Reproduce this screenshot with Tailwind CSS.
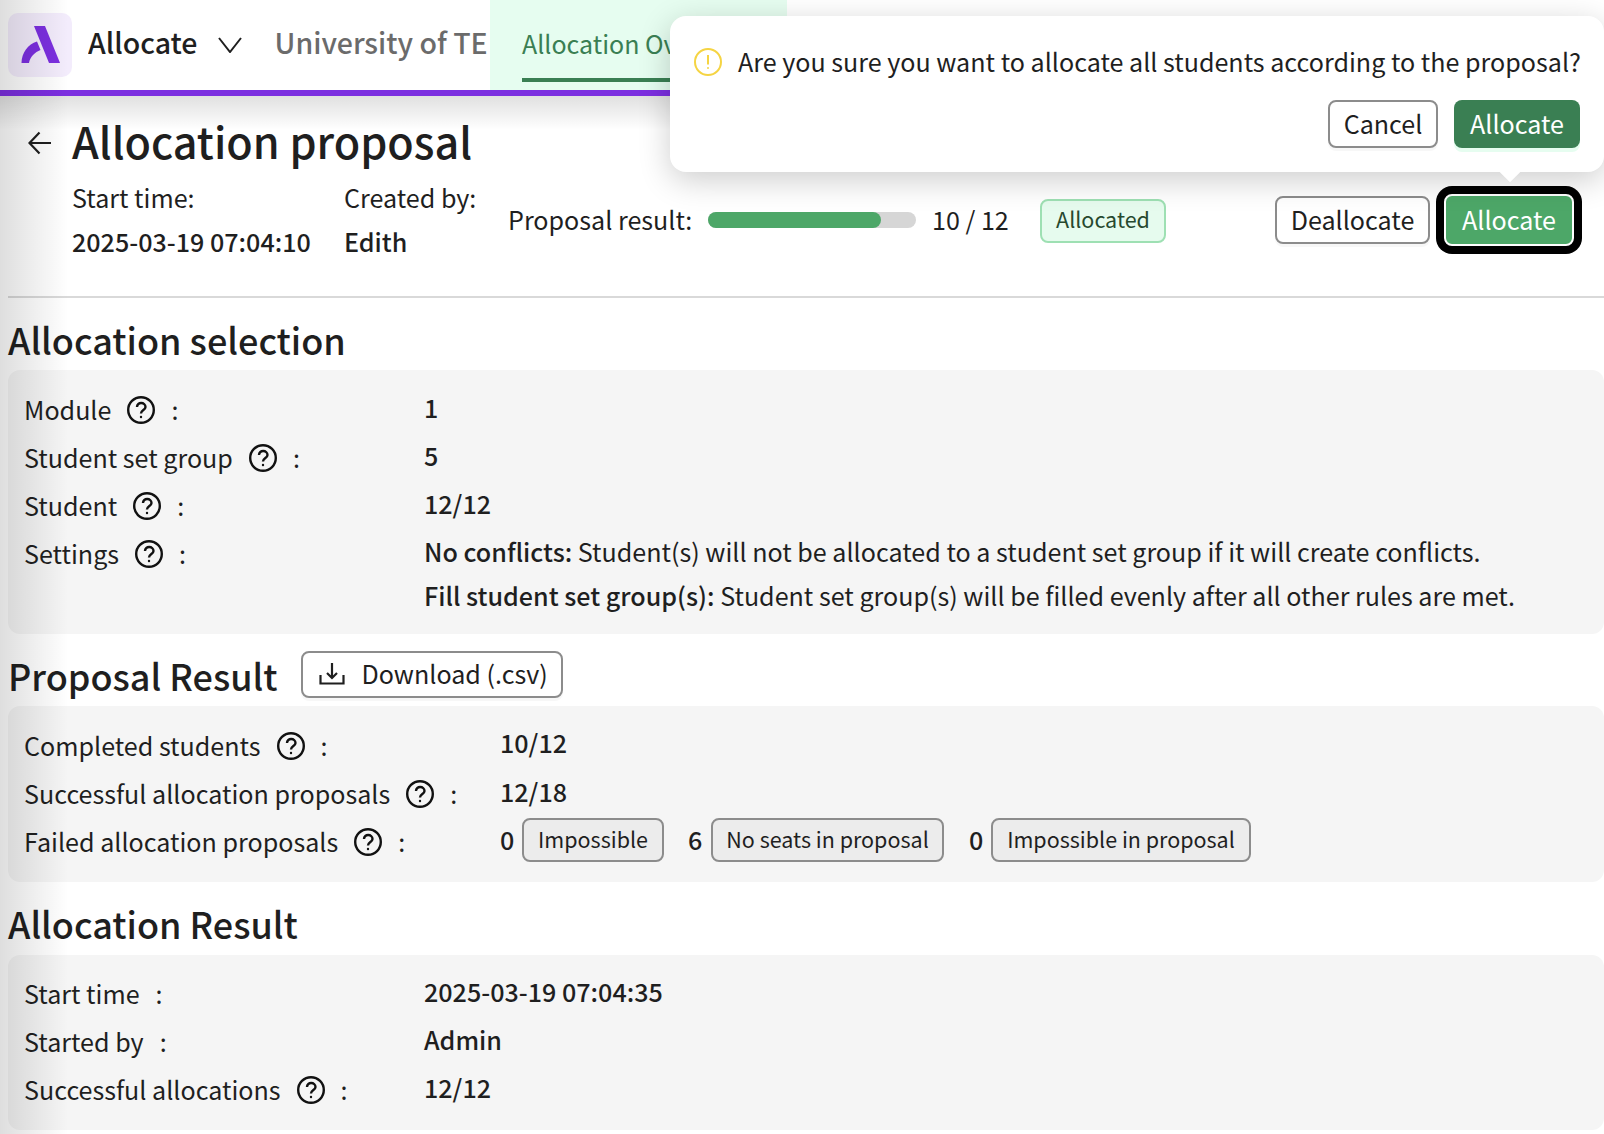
<!DOCTYPE html>
<html lang="en">
  <head>
    <meta charset="UTF-8" />
    <title>Allocation proposal</title>
    <script src="https://cdn.jsdelivr.net/npm/@tailwindcss/browser@4"></script>
  </head>
  <body class="bg-white">
    <div class="relative w-[1604px] h-[1134px] overflow-hidden whitespace-nowrap text-[25.1px] text-[#1f1f1f] font-['Noto_Sans_CJK_SC','Noto_Sans',sans-serif]">
      <!-- header -->
      <header class="flex h-[96px] border-b-[6px] border-[#7c2fe0]">
        <div class="ml-[8px] mt-[13px] w-[64px] h-[64px] rounded-[10px] bg-[#f3ecfc]">
          <svg viewBox="0 0 64 64" class="w-[64px] h-[64px]" fill="#7c2fe0">
            <path d="M26 13H37L52 50H41Z" />
            <path d="M13.5 50C13.5 40 20 31 29 28.5L32.500 37C27 39 22 44 21 50Z" />
          </svg>
        </div>
        <div class="ml-[16px] w-[402px] h-[90px] flex items-center overflow-hidden">
          <span class="text-[28.5px] leading-[40px] font-medium -translate-y-[3px]">Allocate</span>
          <svg viewBox="0 0 24 16" class="shrink-0 ml-[20px] w-[24px] h-[16px]" fill="none" stroke="#1f1f1f" stroke-width="2">
            <path d="M1 1L12 15L23 1" />
          </svg>
          <span class="ml-[33px] text-[28.5px] leading-[40px] font-medium text-[#6b6b6b] -translate-y-[3px]">University of TE</span>
        </div>
        <div class="relative w-[297px] h-[90px] pl-[32px] bg-[#e6fdf0] text-[#3a7f53] text-[25px] leading-[86px] overflow-hidden">
          Allocation Overview
          <div class="absolute left-[32px] right-0 top-[78px] h-[4px] bg-[#3a7f53]"></div>
        </div>
      </header>

      <!-- proposal head -->
      <div class="h-[200px] pl-[28px] pt-[16px]">
        <div class="flex items-center h-[56px]">
          <svg viewBox="0 0 24 24" class="shrink-0 mt-[6px] w-[24px] h-[24px]" fill="none" stroke="#1f1f1f" stroke-width="2.200">
            <path d="M23 12H1.500M11.500 1.500L1.500 12L11.500 22.500" />
          </svg>
          <h1 class="ml-[20px] text-[43.100px] leading-[56px] font-medium">Allocation proposal</h1>
        </div>
        <div class="flex items-center mt-[8px] h-[88px] pl-[44px]">
          <div class="w-[272px] leading-[44px] -translate-y-px">
            <div>Start time:</div>
            <div class="font-medium">2025-03-19 07:04:10</div>
          </div>
          <div class="w-[164px] leading-[44px] -translate-y-px">
            <div>Created by:</div>
            <div class="font-medium">Edith</div>
          </div>
          <div class="w-[200px]">Proposal result:</div>
          <div class="w-[208px] h-[16px] rounded-full bg-[#d6d6d6]">
            <div class="h-[16px] w-[173px] rounded-full bg-[#4da768]"></div>
          </div>
          <div class="ml-[16px] w-[108px]">10 / 12</div>
          <div class="w-[126px] h-[44px] translate-y-px flex items-center justify-center rounded-[8px] border-2 border-[#9ee0b3] bg-[#e6fbee] text-[21.500px] text-[#27492f]"><span class="-translate-y-[2px]">Allocated</span></div>
          <button class="ml-[109px] w-[155px] h-[48px] flex items-center justify-center rounded-[8px] border-2 border-[#8c8c8c] bg-white shadow-[0_3px_0_rgba(0,0,0,0.03)]">Deallocate</button>
          <button class="ml-[14px] w-[130px] h-[52px] flex items-center justify-center rounded-[8px] border-2 border-white bg-[#4da768] text-white shadow-[0_0_0_8px_black]">Allocate</button>
        </div>
      </div>

      <hr class="ml-[8px] border-0 h-[2px] bg-[#d9d9d9]" />

      <main class="pl-[8px]">
        <h2 class="h-[72px] pt-[10px] flex items-center text-[36px] font-medium">Allocation selection</h2>
        <section class="rounded-[12px] bg-[#f5f5f5] pl-[16px] py-[16px]">
          <div class="flex flex-col gap-[4px]">
            <div class="flex">
              <div class="w-[400px] flex items-center h-[44px] mt-[2px] -mb-[2px]">
                Module
                <svg viewBox="0 0 28 28" class="shrink-0 ml-[16px] w-[28px] h-[28px]" fill="none" stroke="#111" stroke-width="2.400"><circle cx="14" cy="14" r="12.800" /><path d="M10 11C10 5.500 18.500 6 18.500 11C18.500 14 14 14 14 17.500" /><circle cx="14" cy="21" r="1.200" fill="#111" stroke="none" /></svg>
                <span class="ml-[16px]">:</span>
              </div>
              <div class="leading-[44px] font-medium -translate-y-px">1</div>
            </div>
            <div class="flex">
              <div class="w-[400px] flex items-center h-[44px] mt-[2px] -mb-[2px]">
                Student set group
                <svg viewBox="0 0 28 28" class="shrink-0 ml-[16px] w-[28px] h-[28px]" fill="none" stroke="#111" stroke-width="2.400"><circle cx="14" cy="14" r="12.800" /><path d="M10 11C10 5.500 18.500 6 18.500 11C18.500 14 14 14 14 17.500" /><circle cx="14" cy="21" r="1.200" fill="#111" stroke="none" /></svg>
                <span class="ml-[16px]">:</span>
              </div>
              <div class="leading-[44px] font-medium -translate-y-px">5</div>
            </div>
            <div class="flex">
              <div class="w-[400px] flex items-center h-[44px] mt-[2px] -mb-[2px]">
                Student
                <svg viewBox="0 0 28 28" class="shrink-0 ml-[16px] w-[28px] h-[28px]" fill="none" stroke="#111" stroke-width="2.400"><circle cx="14" cy="14" r="12.800" /><path d="M10 11C10 5.500 18.500 6 18.500 11C18.500 14 14 14 14 17.500" /><circle cx="14" cy="21" r="1.200" fill="#111" stroke="none" /></svg>
                <span class="ml-[16px]">:</span>
              </div>
              <div class="leading-[44px] font-medium -translate-y-px">12/12</div>
            </div>
            <div class="flex">
              <div class="w-[400px] flex items-center h-[44px] mt-[2px] -mb-[2px]">
                Settings
                <svg viewBox="0 0 28 28" class="shrink-0 ml-[16px] w-[28px] h-[28px]" fill="none" stroke="#111" stroke-width="2.400"><circle cx="14" cy="14" r="12.800" /><path d="M10 11C10 5.500 18.500 6 18.500 11C18.500 14 14 14 14 17.500" /><circle cx="14" cy="21" r="1.200" fill="#111" stroke="none" /></svg>
                <span class="ml-[16px]">:</span>
              </div>
              <div class="leading-[44px] -translate-y-px">
                <div><span class="font-medium">No conflicts:</span> Student(s) will not be allocated to a student set group if it will create conflicts.</div>
                <div><span class="font-medium">Fill student set group(s):</span> Student set group(s) will be filled evenly after all other rules are met.</div>
              </div>
            </div>
          </div>
        </section>

        <div class="h-[72px] pt-[10px] flex items-center">
          <h2 class="text-[36px] font-medium">Proposal Result</h2>
          <button class="ml-[23px] mt-[-1px] w-[262px] h-[47px] flex items-center pl-[16px] rounded-[8px] border-2 border-[#8c8c8c] bg-white shadow-[0_3px_0_rgba(0,0,0,0.03)]">
            <svg viewBox="0 0 26 26" class="shrink-0 w-[26px] h-[26px]" fill="none" stroke="#1f1f1f" stroke-width="2.200">
              <path d="M13 1V16M8 11L13 16L18 11M1.500 13V21.500H24.500V13" />
            </svg>
            <span class="ml-[17px] -translate-y-px">Download (.csv)</span>
          </button>
        </div>
        <section class="rounded-[12px] bg-[#f5f5f5] pl-[16px] pt-[16px] pb-[20px]">
          <div class="flex flex-col gap-[4px]">
            <div class="flex">
              <div class="w-[476px] flex items-center h-[44px] mt-[2px] -mb-[2px]">
                Completed students
                <svg viewBox="0 0 28 28" class="shrink-0 ml-[16px] w-[28px] h-[28px]" fill="none" stroke="#111" stroke-width="2.400"><circle cx="14" cy="14" r="12.800" /><path d="M10 11C10 5.500 18.500 6 18.500 11C18.500 14 14 14 14 17.500" /><circle cx="14" cy="21" r="1.200" fill="#111" stroke="none" /></svg>
                <span class="ml-[16px]">:</span>
              </div>
              <div class="leading-[44px] font-medium -translate-y-[2px]">10/12</div>
            </div>
            <div class="flex">
              <div class="w-[476px] flex items-center h-[44px] mt-[2px] -mb-[2px]">
                Successful allocation proposals
                <svg viewBox="0 0 28 28" class="shrink-0 ml-[16px] w-[28px] h-[28px]" fill="none" stroke="#111" stroke-width="2.400"><circle cx="14" cy="14" r="12.800" /><path d="M10 11C10 5.500 18.500 6 18.500 11C18.500 14 14 14 14 17.500" /><circle cx="14" cy="21" r="1.200" fill="#111" stroke="none" /></svg>
                <span class="ml-[16px]">:</span>
              </div>
              <div class="leading-[44px] font-medium -translate-y-px">12/18</div>
            </div>
            <div class="flex">
              <div class="w-[476px] flex items-center h-[44px] mt-[2px] -mb-[2px]">
                Failed allocation proposals
                <svg viewBox="0 0 28 28" class="shrink-0 ml-[16px] w-[28px] h-[28px]" fill="none" stroke="#111" stroke-width="2.400"><circle cx="14" cy="14" r="12.800" /><path d="M10 11C10 5.500 18.500 6 18.500 11C18.500 14 14 14 14 17.500" /><circle cx="14" cy="21" r="1.200" fill="#111" stroke="none" /></svg>
                <span class="ml-[16px]">:</span>
              </div>
              <div class="flex items-center h-[44px] font-medium">
                <span class="w-[22px]">0</span>
                <span class="w-[142px] h-[44px] flex items-center justify-center rounded-[8px] border-2 border-[#8c8c8c] bg-[#ececec] text-[21.500px] font-normal"><span class="-translate-y-px">Impossible</span></span>
                <span class="ml-[24px] w-[23px]">6</span>
                <span class="w-[233px] h-[44px] flex items-center justify-center rounded-[8px] border-2 border-[#8c8c8c] bg-[#ececec] text-[21.500px] font-normal"><span class="-translate-y-px">No seats in proposal</span></span>
                <span class="ml-[25px] w-[22px]">0</span>
                <span class="w-[260px] h-[44px] flex items-center justify-center rounded-[8px] border-2 border-[#8c8c8c] bg-[#ececec] text-[21.500px] font-normal"><span class="-translate-y-px">Impossible in proposal</span></span>
              </div>
            </div>
          </div>
        </section>

        <h2 class="h-[73px] pt-[9px] flex items-center text-[36px] font-medium">Allocation Result</h2>
        <section class="rounded-[12px] bg-[#f5f5f5] pl-[16px] pt-[15px] pb-[20px]">
          <div class="flex flex-col gap-[4px]">
            <div class="flex">
              <div class="w-[400px] flex items-center h-[44px] mt-[2px] -mb-[2px]">
                Start time
                <span class="ml-[16px]">:</span>
              </div>
              <div class="leading-[44px] font-medium -translate-y-px">2025-03-19 07:04:35</div>
            </div>
            <div class="flex">
              <div class="w-[400px] flex items-center h-[44px] mt-[2px] -mb-[2px]">
                Started by
                <span class="ml-[16px]">:</span>
              </div>
              <div class="leading-[44px] font-medium -translate-y-px">Admin</div>
            </div>
            <div class="flex">
              <div class="w-[400px] flex items-center h-[44px] mt-[2px] -mb-[2px]">
                Successful allocations
                <svg viewBox="0 0 28 28" class="shrink-0 ml-[16px] w-[28px] h-[28px]" fill="none" stroke="#111" stroke-width="2.400"><circle cx="14" cy="14" r="12.800" /><path d="M10 11C10 5.500 18.500 6 18.500 11C18.500 14 14 14 14 17.500" /><circle cx="14" cy="21" r="1.200" fill="#111" stroke="none" /></svg>
                <span class="ml-[16px]">:</span>
              </div>
              <div class="leading-[44px] font-medium -translate-y-px">12/12</div>
            </div>
          </div>
        </section>
      </main>

      <!-- shadows cast over the page -->
      <div class="absolute left-0 top-0 bottom-0 w-[68px] pointer-events-none bg-linear-to-r from-black/13 to-transparent"></div>
      <div class="absolute left-0 right-0 top-[96px] h-[34px] pointer-events-none bg-linear-to-b from-black/12 to-transparent"></div>

      <!-- popconfirm -->
      <div class="absolute left-[670px] top-[16px] w-[934px] h-[156px] rounded-[16px] bg-white shadow-[0_8px_32px_rgba(0,0,0,0.2)] pl-[24px] pt-[24px] pr-[24px]">
        <div class="absolute left-[832px] top-[147px] w-[16px] h-[16px] rotate-45 bg-white"></div>
        <div class="flex items-center h-[44px]">
          <svg viewBox="0 0 28 28" class="shrink-0 w-[28px] h-[28px]" fill="none" stroke="#f5d443" stroke-width="2"><circle cx="14" cy="14" r="13" /><path d="M14 7V16.500" /><circle cx="14" cy="20" r="1" fill="#f5d443" stroke="none" /></svg>
          <span class="ml-[16px]">Are you sure you want to allocate all students according to the proposal?</span>
        </div>
        <div class="relative flex justify-end gap-[16px] mt-[16px]">
          <button class="w-[110px] h-[48px] flex items-center justify-center rounded-[8px] border-2 border-[#8c8c8c] bg-white shadow-[0_3px_0_rgba(0,0,0,0.03)]">Cancel</button>
          <button class="w-[126px] h-[48px] flex items-center justify-center rounded-[8px] bg-[#3a7f53] text-white shadow-[0_4px_0_#e6fdf0]">Allocate</button>
        </div>
      </div>
    </div>
  </body>
</html>
